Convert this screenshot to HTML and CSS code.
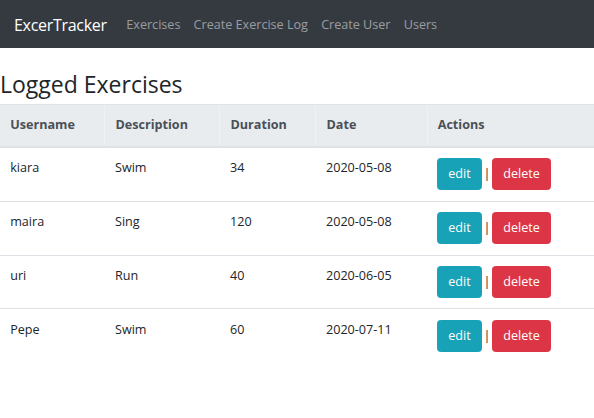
FILE: index.html
```html
<!DOCTYPE html>
<html lang="en">
<head>
<meta charset="utf-8">
<title>ExcerTracker</title>
<link rel="stylesheet" href="styles.css">
</head>
<body>
<div class="page">
  <nav class="navbar">
    <a class="brand" href="#">ExcerTracker</a>
    <ul class="nav">
      <li><a class="nav-link" href="#">Exercises</a></li>
      <li><a class="nav-link" href="#">Create Exercise Log</a></li>
      <li><a class="nav-link" href="#">Create User</a></li>
      <li><a class="nav-link" href="#">Users</a></li>
    </ul>
  </nav>
  <div class="spacer"></div>
  <h3 class="title">Logged Exercises</h3>
  <table class="table">
    <thead>
      <tr>
        <th class="c1">Username</th>
        <th class="c2">Description</th>
        <th class="c3">Duration</th>
        <th class="c4">Date</th>
        <th class="c5">Actions</th>
      </tr>
    </thead>
    <tbody>
      <tr>
        <td>kiara</td><td>Swim</td><td>34</td><td>2020-05-08</td>
        <td class="actions"><a class="btn btn-info" href="#">edit</a> | <a class="btn btn-danger" href="#">delete</a></td>
      </tr>
      <tr>
        <td>maira</td><td>Sing</td><td>120</td><td>2020-05-08</td>
        <td class="actions"><a class="btn btn-info" href="#">edit</a> | <a class="btn btn-danger" href="#">delete</a></td>
      </tr>
      <tr>
        <td>uri</td><td>Run</td><td>40</td><td>2020-06-05</td>
        <td class="actions"><a class="btn btn-info" href="#">edit</a> | <a class="btn btn-danger" href="#">delete</a></td>
      </tr>
      <tr>
        <td>Pepe</td><td>Swim</td><td>60</td><td>2020-07-11</td>
        <td class="actions"><a class="btn btn-info" href="#">edit</a> | <a class="btn btn-danger" href="#">delete</a></td>
      </tr>
    </tbody>
  </table>
</div>
</body>
</html>
```

FILE: styles.css
```css
* { box-sizing: border-box; }
html, body {
  margin: 0;
  padding: 0;
  background: #fff;
}
body {
  font-family: "Open Sans", "Noto Sans", sans-serif;
  font-size: 12.6px;
  line-height: 20.4px;
  color: #212529;
}
.page { width: 594px; }
.navbar {
  height: 48px;
  background: #343a40;
  display: flex;
  align-items: center;
  padding: 3px 14px 0 14px;
}
.brand {
  color: #fff;
  text-decoration: none;
  font-size: 16px;
  margin-right: 13px;
  letter-spacing: -0.3px;
}
.nav {
  list-style: none;
  margin: 0;
  padding: 0;
  display: flex;
}
.nav-link {
  display: block;
  color: rgba(255,255,255,0.5);
  text-decoration: none;
  font-size: 12.6px;
  padding: 0 6.6px;
}
.spacer { height: 22.4px; }
.title {
  margin: 0 0 4.8px 0;
  padding-left: 0;
  font-size: 23px;
  line-height: 28.6px;
  font-weight: 500;
  color: #212529;
}
.table {
  width: 100%;
  border-collapse: collapse;
  table-layout: fixed;
}
.table th {
  background: #e9ecef;
  color: #495057;
  font-weight: 700;
  text-align: left;
  padding: 10.2px 10.2px 10.2px 11px;
  border-top: 1px solid #dee2e6;
  border-bottom: 2px solid #dee2e6;
  border-left: 1px solid #eff1f3;
}
.table th.c1 { width: 104px; border-left: none; padding-left: 10.2px; }
.table th.c2 { width: 115px; }
.table th.c3 { width: 96px; }
.table th.c4 { width: 112px; }
.table th.c5 { padding-left: 10.2px; }
.table td {
  padding: 10.2px 10.2px 10.2px 11px;
  border-top: 1px solid #dee2e6;
  vertical-align: top;
}
.table td:first-child { padding-left: 10.2px; }
.table td.actions { padding-left: 10.2px; word-spacing: -1.4px; }
.table tbody tr:first-child td { border-top: none; }
.btn {
  display: inline-block;
  padding: 5.1px 10px;
  border: 1px solid transparent;
  border-radius: 3.4px;
  color: #fff;
  text-decoration: none;
  line-height: 20.4px;
  font-size: 12.6px;
  word-spacing: normal;
}
.btn-info { background: #17a2b8; border-color: #17a2b8; }
.btn-danger { background: #dc3545; border-color: #dc3545; }
```
